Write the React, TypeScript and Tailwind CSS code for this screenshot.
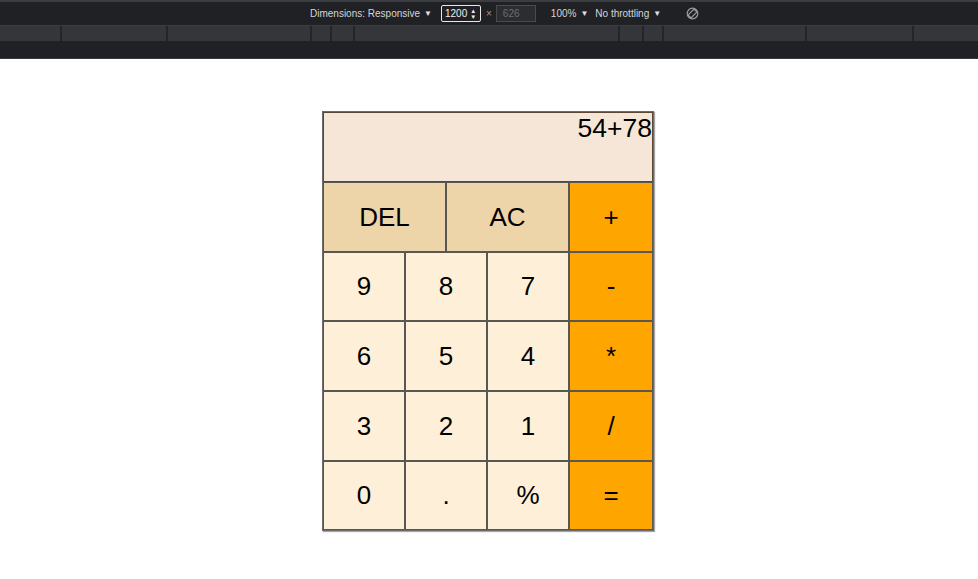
import React from "react";

const sepXs = [62, 168, 312, 332, 355, 620, 644, 664, 807, 914];

function Ruler() {
  const segs: number[] = [];
  let prev = 0;
  for (const x of sepXs) {
    segs.push(x - prev);
    prev = x;
  }
  segs.push(978 - prev);
  return (
    <div className="flex h-[15px] bg-[#35363a]">
      {segs.map((w, i) => (
        <div
          key={i}
          className="h-full border-r-2 border-[#242528] last:border-r-0"
          style={{ width: w }}
        />
      ))}
    </div>
  );
}

function Caret() {
  return <span className="ml-[4px] text-[8px] text-[#e0e0e0]">▼</span>;
}

function DevBar() {
  return (
    <div className="bg-[#202124] font-['Liberation_Sans',Arial,sans-serif]">
      <div className="h-[2px] bg-[#3c3d40]" />
      <div className="flex h-[23px] items-center text-[10px] text-[#d5d5d5]">
        <div className="ml-[310px] flex items-center">
          Dimensions: Responsive
          <Caret />
        </div>
        <div className="ml-[9px] flex h-[17px] w-[40px] items-center rounded-[2px] border border-[#e8e8e8] pl-[3px] text-[#f0f0f0]">
          1200
          <span className="ml-[3px] flex flex-col text-[6px] leading-[6px]">
            <span>▲</span>
            <span>▼</span>
          </span>
        </div>
        <span className="ml-[5px] text-[#9a9a9a]">×</span>
        <div className="ml-[4px] flex h-[17px] w-[40px] items-center border border-[#4a4b4e] bg-[#2c2d30] pl-[6px] text-[#6e6e6e]">
          626
        </div>
        <div className="ml-[15px] flex items-center">
          100%
          <Caret />
        </div>
        <div className="ml-[7px] flex items-center">
          No throttling
          <Caret />
        </div>
        <svg className="ml-[25px]" width="13" height="13" viewBox="0 0 13 13" fill="none" stroke="#9a9a9a" strokeWidth="1.2">
          <circle cx="6.5" cy="6.5" r="5.3" />
          <rect x="4.4" y="2.3" width="4.2" height="8.4" rx="0.6" transform="rotate(45 6.5 6.5)" />
        </svg>
      </div>
      <div className="h-[1px] bg-[#3c3d40]" />
      <Ruler />
      <div className="h-[17px] bg-[#202124]" />
      <div className="h-[1px] bg-[#3a3b3e]" />
    </div>
  );
}

type Btn = { label: string; kind: "top" | "num" | "op"; w: string };

const btnCls = {
  top: "bg-[#eed4a9]",
  num: "bg-[#fdefd8]",
  op: "bg-[#ffa500]",
};

function Key({ b, h }: { b: Btn; h: string }) {
  return (
    <div
      className={`flex items-center justify-center border border-[#5a5651] text-[26px] text-black ${btnCls[b.kind]} ${b.w} ${h}`}
    >
      {b.label}
    </div>
  );
}

export default function App() {
  const rows: Btn[][] = [
    [
      { label: "DEL", kind: "top", w: "w-[123px]" },
      { label: "AC", kind: "top", w: "w-[123px]" },
      { label: "+", kind: "op", w: "w-[84px]" },
    ],
    [
      { label: "9", kind: "num", w: "w-[82px]" },
      { label: "8", kind: "num", w: "w-[82px]" },
      { label: "7", kind: "num", w: "w-[82px]" },
      { label: "-", kind: "op", w: "w-[84px]" },
    ],
    [
      { label: "6", kind: "num", w: "w-[82px]" },
      { label: "5", kind: "num", w: "w-[82px]" },
      { label: "4", kind: "num", w: "w-[82px]" },
      { label: "*", kind: "op", w: "w-[84px]" },
    ],
    [
      { label: "3", kind: "num", w: "w-[82px]" },
      { label: "2", kind: "num", w: "w-[82px]" },
      { label: "1", kind: "num", w: "w-[82px]" },
      { label: "/", kind: "op", w: "w-[84px]" },
    ],
    [
      { label: "0", kind: "num", w: "w-[82px]" },
      { label: ".", kind: "num", w: "w-[82px]" },
      { label: "%", kind: "num", w: "w-[82px]" },
      { label: "=", kind: "op", w: "w-[84px]" },
    ],
  ];
  const heights = ["h-[70px]", "h-[69px]", "h-[70px]", "h-[70px]", "h-[69px]"];
  return (
    <div className="h-[579px] w-[978px] overflow-hidden bg-white font-['Liberation_Sans',Arial,sans-serif]">
      <DevBar />
      <div className="flex justify-center pt-[52px]">
        <div className="ml-[-2px] w-[332px] border border-[#6b6b6b] shadow-[1px_1px_1px_rgba(0,0,0,0.35)]">
          <div className="flex h-[70px] items-start justify-end border border-[#5c4735] bg-[#f5e6d7] text-[26.5px] leading-[30px] text-black">
            54+78
          </div>
          {rows.map((r, i) => (
            <div key={i} className="flex">
              {r.map((b) => (
                <Key key={b.label} b={b} h={heights[i]} />
              ))}
            </div>
          ))}
        </div>
      </div>
    </div>
  );
}
